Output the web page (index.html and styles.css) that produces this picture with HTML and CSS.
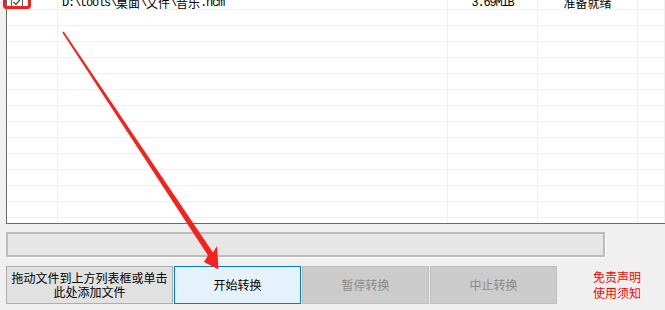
FILE: index.html
```html
<!DOCTYPE html>
<html lang="zh">
<head>
<meta charset="utf-8">
<title>NCM 转换</title>
<link rel="stylesheet" href="styles.css">
</head>
<body>
<div class="app">
  <div class="list">
    <div class="row first">
      <div class="cell c0">
        <svg class="check" width="12" height="12" viewBox="0 0 12 12"><rect x="0.5" y="0.5" width="11" height="11" fill="#fff" stroke="#5c5c5c"/><path d="M2.5 6 L5 8.5 L9.5 3" fill="none" stroke="#4a4a4a" stroke-width="1.3"/></svg>
      </div>
      <div class="cell c1 txt"><span class="a">D:\tools\</span>桌面<span class="a">\</span>文件<span class="a">\</span>音乐<span class="a">.ncm</span></div>
      <div class="cell c2 center txt"><span class="a">3.69MiB</span></div>
      <div class="cell c3 center txt">准备就绪</div>
      <div class="cell c4"></div>
    </div>
    <div class="row"><div class="cell c0"></div><div class="cell c1"></div><div class="cell c2"></div><div class="cell c3"></div><div class="cell c4"></div></div>
    <div class="row"><div class="cell c0"></div><div class="cell c1"></div><div class="cell c2"></div><div class="cell c3"></div><div class="cell c4"></div></div>
    <div class="row"><div class="cell c0"></div><div class="cell c1"></div><div class="cell c2"></div><div class="cell c3"></div><div class="cell c4"></div></div>
    <div class="row"><div class="cell c0"></div><div class="cell c1"></div><div class="cell c2"></div><div class="cell c3"></div><div class="cell c4"></div></div>
    <div class="row"><div class="cell c0"></div><div class="cell c1"></div><div class="cell c2"></div><div class="cell c3"></div><div class="cell c4"></div></div>
    <div class="row"><div class="cell c0"></div><div class="cell c1"></div><div class="cell c2"></div><div class="cell c3"></div><div class="cell c4"></div></div>
    <div class="row"><div class="cell c0"></div><div class="cell c1"></div><div class="cell c2"></div><div class="cell c3"></div><div class="cell c4"></div></div>
    <div class="row"><div class="cell c0"></div><div class="cell c1"></div><div class="cell c2"></div><div class="cell c3"></div><div class="cell c4"></div></div>
    <div class="row"><div class="cell c0"></div><div class="cell c1"></div><div class="cell c2"></div><div class="cell c3"></div><div class="cell c4"></div></div>
    <div class="row"><div class="cell c0"></div><div class="cell c1"></div><div class="cell c2"></div><div class="cell c3"></div><div class="cell c4"></div></div>
    <div class="row"><div class="cell c0"></div><div class="cell c1"></div><div class="cell c2"></div><div class="cell c3"></div><div class="cell c4"></div></div>
    <div class="row"><div class="cell c0"></div><div class="cell c1"></div><div class="cell c2"></div><div class="cell c3"></div><div class="cell c4"></div></div>
    <div class="row"><div class="cell c0"></div><div class="cell c1"></div><div class="cell c2"></div><div class="cell c3"></div><div class="cell c4"></div></div>
    <div class="row tail"><div class="cell c0"></div><div class="cell c1"></div><div class="cell c2"></div><div class="cell c3"></div><div class="cell c4"></div></div>
  </div>

  <div class="progress"></div>

  <div class="actions">
    <button class="btn btn-add">拖动文件到上方列表框或单击<br>此处添加文件</button>
    <button class="btn btn-primary">开始转换</button>
    <button class="btn btn-disabled">暂停转换</button>
    <button class="btn btn-disabled">中止转换</button>
    <div class="links">免责声明<br>使用须知</div>
  </div>

  <svg class="overlay" width="665" height="310" viewBox="0 0 665 310">
    <rect x="4.5" y="-10" width="25" height="23.5" rx="2" fill="none" stroke="#f0221b" stroke-width="3"/>
    <polygon points="63.7,37.6 213,258.4 217,252 218.5,275.5 204,268 208,261.6 62.3,38.4" fill="#f5221b"/>
  </svg>
</div>
</body>
</html>
```

FILE: styles.css
```css
html, body {
  margin: 0;
  padding: 0;
}

body {
  background: #f0f0f0;
  font-family: "Noto Sans CJK SC", "Liberation Sans", sans-serif;
  font-size: 12px;
  color: #000;
  width: 665px;
  height: 310px;
  overflow: hidden;
}

.app {
  position: relative;
  width: 665px;
  height: 310px;
}

.list {
  margin-top: -6px;
  margin-left: 6px;
  background: #fff;
  border-left: 1px solid #6a6a6a;
  border-bottom: 1px solid #6a6a6a;
}

.row {
  display: grid;
  grid-template-columns: 51px 390px 90px 100px 1fr;
  height: 16px;
}

.row.tail {
  height: 5px;
}

.cell {
  box-sizing: border-box;
  border-right: 1px solid #f0f0f0;
  border-bottom: 1px solid #f0f0f0;
  white-space: nowrap;
  overflow: hidden;
  display: flex;
  align-items: center;
}

.cell.txt {
  align-items: flex-start;
  padding-top: 3px;
  line-height: 12px;
}

.row.tail .cell {
  border-bottom: none;
}

.c0 {
  padding-left: 4px;
}

.c1 {
  padding-left: 4px;
}

.center {
  justify-content: center;
}

.a {
  font-family: "Liberation Mono", monospace;
  font-size: 12px;
  letter-spacing: -1.2px;
}

.check {
  display: block;
}

.progress {
  margin: 8px 0 0 6px;
  width: 599px;
  height: 25px;
  box-sizing: border-box;
  background: #e6e6e6;
  border: 2px solid #bcbcbc;
  box-shadow: 1px 1px 0 #fff;
}

.actions {
  display: flex;
  align-items: center;
  gap: 1px;
  margin-top: 9px;
  padding-left: 6px;
}

.btn {
  box-sizing: border-box;
  height: 38px;
  width: 127px;
  margin: 0;
  padding: 0;
  font-family: "Noto Sans CJK SC", sans-serif;
  font-size: 12px;
  line-height: 14px;
  text-align: center;
  border: 1px solid #adadad;
  background: #e1e1e1;
  color: #000;
}

.btn-add {
  width: 167px;
}

.btn-primary {
  border-color: #0078d7;
  background: #e5f1fb;
}

.btn-disabled {
  border-color: #bfbfbf;
  background: #cccccc;
  color: #8a8a8a;
}

.links {
  margin-left: 35px;
  color: #ff0000;
  font-size: 12px;
  line-height: 16px;
}

.overlay {
  position: absolute;
  top: 0;
  left: 0;
  pointer-events: none;
}
```
